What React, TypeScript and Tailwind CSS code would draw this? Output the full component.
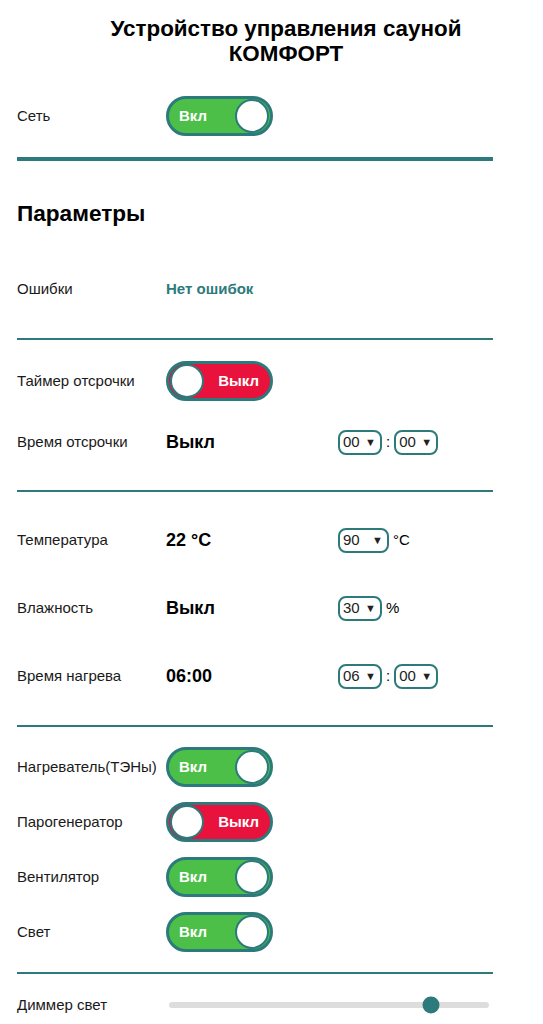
import React from "react";

const teal = "#2c7a7b";

function Toggle({ on }: { on: boolean }) {
  return (
    <div
      className={`relative flex h-[40px] w-[107px] items-center rounded-full border-[3px] border-[#2c7a7b] ${
        on ? "bg-[#4cbf48]" : "bg-[#e8123c]"
      }`}
    >
      {on ? (
        <>
          <span className="ml-[10px] text-[15px] font-bold text-white">Вкл</span>
          <span className="ml-auto mr-[1px] h-[34px] w-[34px] rounded-full border-2 border-[#2c7a7b] bg-white" />
        </>
      ) : (
        <>
          <span className="ml-[1px] h-[34px] w-[34px] rounded-full border-2 border-[#2c7a7b] bg-white" />
          <span className="ml-auto mr-[11px] text-[15px] font-bold text-white">Выкл</span>
        </>
      )}
    </div>
  );
}

function Sel({ v, wide }: { v: string; wide?: boolean }) {
  return (
    <div
      className={`flex h-[25px] items-center rounded-[8px] border-2 border-[#2c7a7b] bg-white pl-[3px] pr-[4px] text-[15px] text-[#222] ${
        wide ? "w-[51px]" : "w-[44px]"
      }`}
    >
      <span>{v}</span>
      <span className="ml-auto text-[11px] leading-none">▼</span>
    </div>
  );
}

function Row({
  label,
  children,
  className = "",
}: {
  label: string;
  children?: React.ReactNode;
  className?: string;
}) {
  return (
    <div className={`flex items-center ${className}`}>
      <div className="w-[149px] shrink-0 text-[15px] text-[#1a1a1a]">{label}</div>
      {children}
    </div>
  );
}

function Line({ className = "" }: { className?: string }) {
  return <div className={`h-[2px] w-[476px] bg-[#2c7a7b] ${className}`} />;
}

export default function App() {
  return (
    <div
      className="min-h-[1024px] w-[543px] bg-white pl-[17px] text-black"
      style={{ fontFamily: '"Liberation Sans", Arial, sans-serif' }}
    >
      <h1 className="pt-[16px] pl-[12px] text-center text-[22.4px] font-bold leading-[25px]">
        Устройство управления сауной
        <br />
        КОМФОРТ
      </h1>

      <Row label="Сеть" className="mt-[30px] h-[40px]">
        <Toggle on />
      </Row>

      <div className="mt-[21px] h-[4px] w-[476px] bg-[#2c7a7b]" />

      <h2 className="mt-[40px] text-[22.6px] font-bold leading-[25px]">Параметры</h2>

      <Row label="Ошибки" className="mt-[53px] h-[20px]">
        <span className="text-[15px] font-bold text-[#2c7a7b]">Нет ошибок</span>
      </Row>

      <Line className="mt-[39px]" />

      <Row label="Таймер отсрочки" className="mt-[21px] h-[40px]">
        <Toggle on={false} />
      </Row>

      <Row label="Время отсрочки" className="mt-[28px] h-[26px]">
        <span className="w-[172px] text-[18px] font-bold">Выкл</span>
        <Sel v="00" />
        <span className="mx-[4px] text-[15px]">:</span>
        <Sel v="00" />
      </Row>

      <Line className="mt-[35px]" />

      <Row label="Температура" className="mt-[35px] h-[26px]">
        <span className="w-[172px] text-[18px] font-bold">22 °C</span>
        <Sel v="90" wide />
        <span className="ml-[4px] text-[15px]">°C</span>
      </Row>

      <Row label="Влажность" className="mt-[42px] h-[26px]">
        <span className="w-[172px] text-[18px] font-bold">Выкл</span>
        <Sel v="30" />
        <span className="ml-[4px] text-[15px]">%</span>
      </Row>

      <Row label="Время нагрева" className="mt-[42px] h-[26px]">
        <span className="w-[172px] text-[18px] font-bold">06:00</span>
        <Sel v="06" />
        <span className="mx-[4px] text-[15px]">:</span>
        <Sel v="00" />
      </Row>

      <Line className="mt-[36px]" />

      <Row label="Нагреватель(ТЭНы)" className="mt-[20px] h-[40px]">
        <Toggle on />
      </Row>
      <Row label="Парогенератор" className="mt-[15px] h-[40px]">
        <Toggle on={false} />
      </Row>
      <Row label="Вентилятор" className="mt-[15px] h-[40px]">
        <Toggle on />
      </Row>
      <Row label="Свет" className="mt-[15px] h-[40px]">
        <Toggle on />
      </Row>

      <Line className="mt-[20px]" />

      <Row label="Диммер свет" className="mt-[21px] h-[20px]">
        <div className="relative ml-[3px] h-[6px] w-[320px] rounded-full bg-[#dddddd]">
          <div
            className="absolute top-1/2 h-[17px] w-[17px] -translate-x-1/2 -translate-y-1/2 rounded-full"
            style={{ left: "82%", backgroundColor: teal }}
          />
        </div>
      </Row>
    </div>
  );
}
